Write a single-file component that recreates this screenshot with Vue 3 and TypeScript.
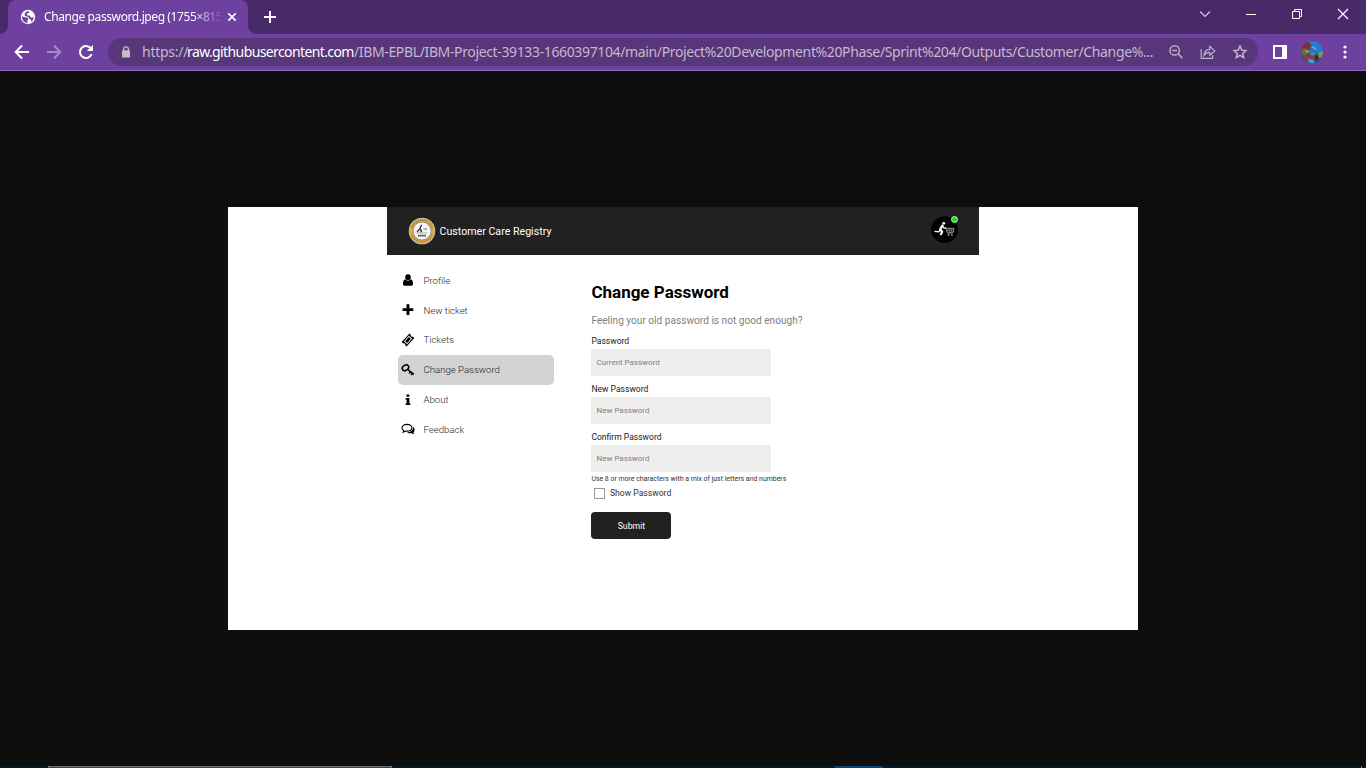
<script setup lang="ts">
interface NavItem {
  label: string
  icon: string
  active?: boolean
}

interface Field {
  label: string
  placeholder: string
}

const navItems: NavItem[] = [
  { label: 'Profile', icon: 'user' },
  { label: 'New ticket', icon: 'plus' },
  { label: 'Tickets', icon: 'ticket' },
  { label: 'Change Password', icon: 'key', active: true },
  { label: 'About', icon: 'info' },
  { label: 'Feedback', icon: 'chat' },
]

const fields: Field[] = [
  { label: 'Password', placeholder: 'Current Password' },
  { label: 'New Password', placeholder: 'New Password' },
  { label: 'Confirm Password', placeholder: 'New Password' },
]
</script>

<template>
  <div class="window">
    <header class="tabstrip">
      <div class="tab">
        <svg class="globe" viewBox="0 0 16 16" width="16" height="16">
          <circle cx="8" cy="8" r="7.2" fill="#fff" />
          <path d="M1.9 7.2 5.2 8.5 7.6 8.6 8.5 10.2 7.4 11.3 7.5 13.9C4.2 13.7 1.8 11 1.9 7.2ZM6.2 2.5 9.3 2.2 8.8 4.1 6.7 4.8 7.2 6.4 9.6 6.6 11.2 8.7 13.7 8.2C13.6 10.3 12.7 11.7 11.3 12.7L10.8 10.5 9.1 9.8 8.5 7.9 5 7.1 4.6 5.1Z" fill="#6e41a0" />
        </svg>
        <span class="tab-title">Change password.jpeg (1755×815</span>
        <svg class="tab-close" viewBox="0 0 10 10" width="10" height="10">
          <path d="M1.3 1.3 8.7 8.7M8.7 1.3 1.3 8.7" stroke="#fff" stroke-width="1.7" />
        </svg>
      </div>
      <svg class="new-tab" viewBox="0 0 12 12" width="12" height="12">
        <path d="M6 0V12M0 6H12" stroke="#fff" stroke-width="2" />
      </svg>
      <div class="controls">
        <svg viewBox="0 0 12 12" width="12" height="12"><path d="M1 3.5 6 8.5 11 3.5" fill="none" stroke="#d7cde2" stroke-width="1.1" /></svg>
        <svg viewBox="0 0 12 12" width="12" height="12"><path d="M1 6.5H11" stroke="#fff" /></svg>
        <svg viewBox="0 0 12 12" width="12" height="12"><path d="M1.5 3.5H8.5V10.5H1.5ZM3.5 3.5V1.5H10.5V8.5H8.5" fill="none" stroke="#fff" /></svg>
        <svg viewBox="0 0 12 12" width="12" height="12"><path d="M1 1 11 11M11 1 1 11" stroke="#fff" stroke-width="1.2" /></svg>
      </div>
    </header>

    <div class="toolbar">
      <div class="nav-buttons">
        <svg viewBox="0 0 16 16" width="16" height="16"><path d="M15 8H2M8 1.5 1.7 8 8 14.5" fill="none" stroke="#fff" stroke-width="2" /></svg>
        <svg viewBox="0 0 16 16" width="16" height="16"><path d="M1 8H14M8 1.5 14.3 8 8 14.5" fill="none" stroke="#a98bc9" stroke-width="2" /></svg>
        <svg viewBox="0 0 16 16" width="16" height="16"><path d="M13.6 10.2A6 6 0 1 1 12.6 4.2" fill="none" stroke="#fff" stroke-width="2" /><path d="M15 .8V7H8.8Z" fill="#fff" /></svg>
      </div>
      <div class="omnibox">
        <svg class="lock" viewBox="0 0 10 12" width="10" height="12">
          <path d="M2.6 5V3.3a2.4 2.4 0 0 1 4.8 0V5" fill="none" stroke="#c3bbcb" stroke-width="1.3" />
          <rect x="1" y="4.3" width="8" height="7.2" rx=".8" fill="#c3bbcb" />
        </svg>
        <div class="url"><span class="url-scheme">https://</span><span class="url-host">raw.githubusercontent.com</span><span class="url-path">/IBM-EPBL/IBM-Project-39133-1660397104/main/Project%20Development%20Phase/Sprint%204/Outputs/Customer/Change%...</span></div>
        <div class="omni-actions">
          <svg viewBox="0 0 16 16" width="16" height="16"><g fill="none" stroke="#bdb0cb" stroke-width="1.5"><circle cx="6.7" cy="6.4" r="4.7" /><path d="M10 9.8 14.3 14.1M4.3 6.4H9.1" /></g></svg>
          <svg viewBox="0 0 16 16" width="16" height="16"><path d="M1.2 5V14.4H12.6V11M4 11.5C4.2 7.4 6.5 5.5 9.8 5.4V2.4L14.8 6.9 9.8 11.1V8.4C7.2 8.2 5.5 9.2 4 11.5Z" fill="none" stroke="#bdb0cb" stroke-width="1.2" /></svg>
          <svg viewBox="0 0 16 16" width="16" height="16"><path d="M8 2.1 9.7 6.1 14 6.5 10.7 9.4 11.7 13.6 8 11.4 4.3 13.6 5.3 9.4 2 6.5 6.3 6.1Z" fill="none" stroke="#c7bcd4" stroke-width="1.4" /></svg>
        </div>
      </div>
      <div class="extras">
        <svg viewBox="0 0 14 14" width="14" height="14"><path d="M0 0H14V14H0ZM2 2V12H9V2Z" fill="#fff" fill-rule="evenodd" /></svg>
        <svg class="account" viewBox="0 0 22 22" width="22" height="22">
          <defs><clipPath id="account-clip"><circle cx="11" cy="11" r="11" /></clipPath></defs>
          <g clip-path="url(#account-clip)">
            <rect width="22" height="22" fill="#39506a" />
            <path d="M8 0H22V10L17 13 13 8 8 6Z" fill="#1d7be0" />
            <path d="M0 8 3 3 9 2 11 5 6 7 3 10Z" fill="#7a3128" />
            <path d="M2 7 6 8 7 13 3 14 0 12Z" fill="#64722f" />
            <path d="M3 14 8 16 14 15 16 18 9 20 4 18Z" fill="#b1352b" />
            <path d="M9 8 13 7 16 10 15 14 11 15 8 12Z" fill="#2d78bd" />
            <path d="M17 12 22 10 22 16 18 17Z" fill="#839b3c" />
            <path d="M7 18 12 19 14 22 8 22Z" fill="#3ba5e8" />
            <path d="M4 9 7 9 9 11 6 12Z" fill="#d7813f" />
            <path d="M10 5 14 6 16 9 13 8ZM11 12 13 13 10 14Z" fill="#8eaaa5" />
            <path d="M14 14 18 16 16 20 13 17Z" fill="#27372f" />
          </g>
        </svg>
        <svg viewBox="0 0 4 14" width="4" height="14"><g fill="#fff"><circle cx="2" cy="2" r="1.6" /><circle cx="2" cy="7" r="1.6" /><circle cx="2" cy="12" r="1.6" /></g></svg>
      </div>
    </div>

    <main class="viewer">
      <div class="picture">
        <div class="topbar">
          <svg class="logo" viewBox="0 0 28 28" width="28" height="28">
            <circle cx="14" cy="14" r="13.3" fill="#bfc2b2" />
            <circle cx="14" cy="14" r="12.5" fill="#e3a849" />
            <circle cx="14" cy="14" r="10.8" fill="none" stroke="#6d5937" stroke-width="1.8" stroke-dasharray="1 1.2" opacity=".65" />
            <path d="M3.4 11A11 11 0 0 0 3.4 17M24.6 11A11 11 0 0 1 24.6 17" fill="none" stroke="#e3a849" stroke-width="3" />
            <circle cx="14" cy="14" r="9" fill="#f4f6f2" stroke="#627076" stroke-width=".6" />
            <path d="M13.6 7.8 11.8 12 9 15M12 12 13.5 14 12.5 15.5" fill="none" stroke="#26383c" stroke-width="1.3" />
            <path d="M15 11H19.5L19 13.2H15.8Z" fill="#b3bbbc" />
            <path d="M8.5 16H19.5" stroke="#8f9799" stroke-width=".7" />
            <path d="M10 18.6H18" stroke="#34464d" stroke-width="1.8" stroke-dasharray="1.6 .5" />
          </svg>
          <span class="brand">Customer Care Registry</span>
          <div class="avatar">
            <svg viewBox="0 0 27 27" width="27" height="27">
              <circle cx="13.5" cy="13.5" r="13.3" fill="#000" />
              <circle cx="12.8" cy="7.3" r="1.4" fill="#fff" />
              <path d="M11.8 8.8 9.2 13.2 11.2 15.8 9.5 19" fill="none" stroke="#fff" stroke-width="2.1" />
              <path d="M9.8 13.7 7.6 15.8 3.5 15.4M11.6 9.8 12.6 11.8 15 12" fill="none" stroke="#fff" stroke-width="1.4" />
              <path d="M15 12.3H23L22.2 16.3H16.2Z" fill="none" stroke="#aaa" stroke-width=".9" />
              <path d="M16 14.2H22.4M18 12.5V16M20.3 12.5V16M16.5 17.8H21.5" stroke="#909090" stroke-width=".7" />
              <circle cx="17.5" cy="19" r=".8" fill="#ccc" /><circle cx="21" cy="19" r=".8" fill="#ccc" />
            </svg>
            <i class="status"></i>
          </div>
        </div>

        <div class="content">
          <nav class="sidebar">
            <div v-for="item in navItems" :key="item.label" class="nav-item" :class="{ active: item.active }">
              <svg viewBox="0 0 14 14" width="14" height="14">
                <g v-if="item.icon === 'user'"><ellipse cx="7" cy="4.2" rx="2.8" ry="3" /><path d="M4.2 6.2C2.5 6.8 2 8.5 2 11 2 12.2 2.6 12.7 3.5 12.7H10.5C11.4 12.7 12 12.2 12 11 12 8.5 11.5 6.8 9.8 6.2 8.5 8.1 5.5 8.1 4.2 6.2Z" /></g>
                <path v-else-if="item.icon === 'plus'" d="M5.5 1.3H8.4V5.2H12.3V8.1H8.4V12H5.5V8.1H1.6V5.2H5.5Z" />
                <g v-else-if="item.icon === 'ticket'" transform="rotate(-48 7 7)">
                  <path fill-rule="evenodd" d="M1.2 3.7H12.8V5.9A1.1 1.1 0 0 0 12.8 8.1V10.3H1.2V8.1A1.1 1.1 0 0 0 1.2 5.9ZM3.4 4.8V9.2H10.6V4.8Z" />
                  <rect x="4.3" y="5.6" width="5.4" height="2.8" />
                </g>
                <g v-else-if="item.icon === 'key'" fill="none" stroke="#000">
                  <ellipse cx="4.5" cy="4.8" rx="3.4" ry="2.6" transform="rotate(-35 4.5 4.8)" stroke-width="1.6" />
                  <path d="M6.2 6 12.8 11.3M9.4 8.8 8.2 10.4M11.5 10.2 10.3 12" stroke-width="1.6" />
                </g>
                <path v-else-if="item.icon === 'info'" d="M5.5 1.4H8.4V3.7H5.5ZM4.7 5H8.4V10.3H9.3V12H4.7V10.3H5.6V6.7H4.7Z" />
                <g v-else>
                  <path d="M12 5.1C14 6.5 14.1 8.9 12.4 10.2L13.4 12.3C11.8 12.2 10.9 11.8 10.1 11.3 8.5 11.5 7 11.2 6 10.5 9.4 10.4 12.3 8.6 12 5.1Z" />
                  <path d="M6 2.4C3 2.4 1 3.8 1 5.8 1 7 1.7 7.9 2.8 8.5L2.1 10.3 4.8 9.1C8.3 9.5 11 8 11 5.8 11 3.8 9 2.4 6 2.4Z" fill="none" stroke="#000" stroke-width="1.1" />
                </g>
              </svg>
              <span>{{ item.label }}</span>
            </div>
          </nav>

          <form class="form" @submit.prevent>
            <h1>Change Password</h1>
            <p class="lead">Feeling your old password is not good enough?</p>
            <div v-for="field in fields" :key="field.label" class="field">
              <label>{{ field.label }}</label>
              <div class="input">{{ field.placeholder }}</div>
            </div>
            <p class="hint">Use 8 or more characters with a mix of just letters and numbers</p>
            <div class="show"><i class="box"></i><span>Show Password</span></div>
            <button class="submit">Submit</button>
          </form>
        </div>
      </div>
    </main>

    <footer class="taskbar">
      <i class="task-search"></i>
      <i class="task-active"></i>
      <i class="task-end"></i>
    </footer>
  </div>
</template>

<style>
body {
  margin: 0;
  overflow: hidden;
  background: #0e0e0e;
}
</style>

<style scoped>
* {
  box-sizing: border-box;
}
svg {
  display: block;
  flex: none;
}
.window {
  display: flex;
  flex-direction: column;
  width: 1366px;
  height: 768px;
  overflow: hidden;
  background: #0e0e0e;
  font-family: Roboto, sans-serif;
  white-space: nowrap;
}
.tabstrip {
  display: flex;
  height: 34px;
  flex: none;
  padding-left: 8px;
  background: #472a67;
  font-family: "Noto Sans", sans-serif;
}
.tab {
  position: relative;
  display: flex;
  align-items: center;
  width: 240px;
  padding: 0 11px 0 12px;
  border-radius: 8px 8px 0 0;
  background: #6e41a0;
}
.tab::before,
.tab::after {
  content: "";
  position: absolute;
  bottom: 0;
  width: 8px;
  height: 8px;
}
.tab::before {
  left: -8px;
  background: radial-gradient(circle at 0 0, #472a67 7.5px, #6e41a0 8px);
}
.tab::after {
  right: -8px;
  background: radial-gradient(circle at 100% 0, #472a67 7.5px, #6e41a0 8px);
}
.tab-title {
  width: 176px;
  margin-left: 8px;
  color: #fff;
  font-size: 12px;
  line-height: 18px;
  letter-spacing: -0.4px;
  mask-image: linear-gradient(90deg, #000 148px, transparent 180px);
}
.tab-close {
  margin-left: 7px;
}
.new-tab {
  align-self: center;
  margin-left: 16px;
}
.controls {
  display: flex;
  gap: 34px;
  margin: 8px 17px 0 auto;
}
.toolbar {
  display: flex;
  align-items: center;
  flex: none;
  height: 37px;
  border-bottom: 1px solid #8a67b3;
  background: #6e41a0;
}
.nav-buttons {
  display: flex;
  gap: 16px;
  margin-left: 14px;
}
.omnibox {
  display: flex;
  align-items: center;
  width: 1150px;
  height: 28px;
  margin-left: 14px;
  padding: 0 10px 0 13px;
  border-radius: 14px;
  background: #573679;
}
.url {
  display: flex;
  width: 1012px;
  flex: none;
  margin-left: 11px;
  font-family: "Noto Sans", sans-serif;
  font-size: 14px;
  line-height: 20px;
  color: #c5b9d1;
}
.url-scheme {
  width: 45px;
  letter-spacing: -0.25px;
}
.url-host {
  width: 167px;
  color: #fff;
  letter-spacing: -0.61px;
}
.url-path {
  letter-spacing: -0.365px;
}
.omni-actions {
  display: flex;
  gap: 16px;
  margin-left: 14px;
}
.extras {
  display: flex;
  align-items: center;
  margin-left: 15px;
}
.account {
  margin: 0 20px 0 14px;
}
.viewer {
  display: flex;
  flex: 1;
  justify-content: center;
  padding-top: 136px;
}
.picture {
  width: 910px;
  height: 423px;
  background: #fff;
}
.topbar {
  display: flex;
  align-items: center;
  width: 592px;
  height: 48px;
  margin: 0 auto;
  padding: 0 21px;
  background: #212121;
}
.brand {
  margin-left: 3.5px;
  color: #fff;
  font-size: 10.65px;
}
.avatar {
  position: relative;
  margin: -3px 0 0 auto;
}
.status {
  position: absolute;
  top: 0;
  right: 0;
  width: 7px;
  height: 7px;
  border: 0.5px solid #b8f8bc;
  border-radius: 50%;
  background: #08e61a;
}
.content {
  display: flex;
  width: 592px;
  margin: 0 auto;
  padding-left: 11px;
}
.sidebar {
  width: 156px;
  padding-top: 10.5px;
}
.nav-item {
  display: flex;
  align-items: center;
  height: 29.8px;
  padding-left: 3px;
  border-radius: 5px;
  color: #1f251f;
  font-size: 9.6px;
  font-weight: 300;
}
.nav-item.active {
  background: #d2d2d2;
}
.nav-item span {
  margin-left: 8.5px;
}
.form {
  width: 240px;
  margin-left: 37.4px;
  padding-top: 27px;
}
h1 {
  margin: 0;
  color: #000;
  font-size: 17px;
  font-weight: 700;
  line-height: 20px;
}
.lead {
  margin: 11px 0 6.3px;
  color: #808080;
  font-size: 10.15px;
  line-height: 16px;
}
.field {
  height: 47.8px;
}
.field label {
  display: block;
  height: 14px;
  color: #222;
  font-size: 8.55px;
  line-height: 12px;
}
.input {
  width: 180px;
  height: 27px;
  padding-left: 5.2px;
  background: #eee;
  color: #808080;
  font-size: 7.95px;
  line-height: 27px;
}
.hint {
  margin: -6px 0 0;
  color: #333;
  font-size: 6.93px;
  line-height: 12px;
}
.show {
  display: flex;
  align-items: center;
  height: 17px;
  padding-left: 2.6px;
  color: #333;
  font-size: 8.6px;
}
.box {
  width: 11px;
  height: 11px;
  margin-right: 5px;
  border: 1px solid #999;
}
.submit {
  display: block;
  width: 80px;
  height: 27px;
  margin-top: 10.4px;
  padding: 0;
  border: 0;
  border-radius: 4px;
  background: #212121;
  color: #fff;
  font-family: inherit;
  font-size: 8.7px;
}
.taskbar {
  display: flex;
  flex: none;
  height: 2px;
  background: #071a27;
}
.task-search {
  width: 344px;
  margin-left: 48px;
  border: 1px solid #64717d;
  border-bottom: 0;
  background: #34495a;
}
.task-active {
  width: 48px;
  margin-left: 443px;
  background: #064479;
}
.task-end {
  width: 1px;
  margin: 0 4px 0 auto;
  background: #7b858c;
}
</style>
